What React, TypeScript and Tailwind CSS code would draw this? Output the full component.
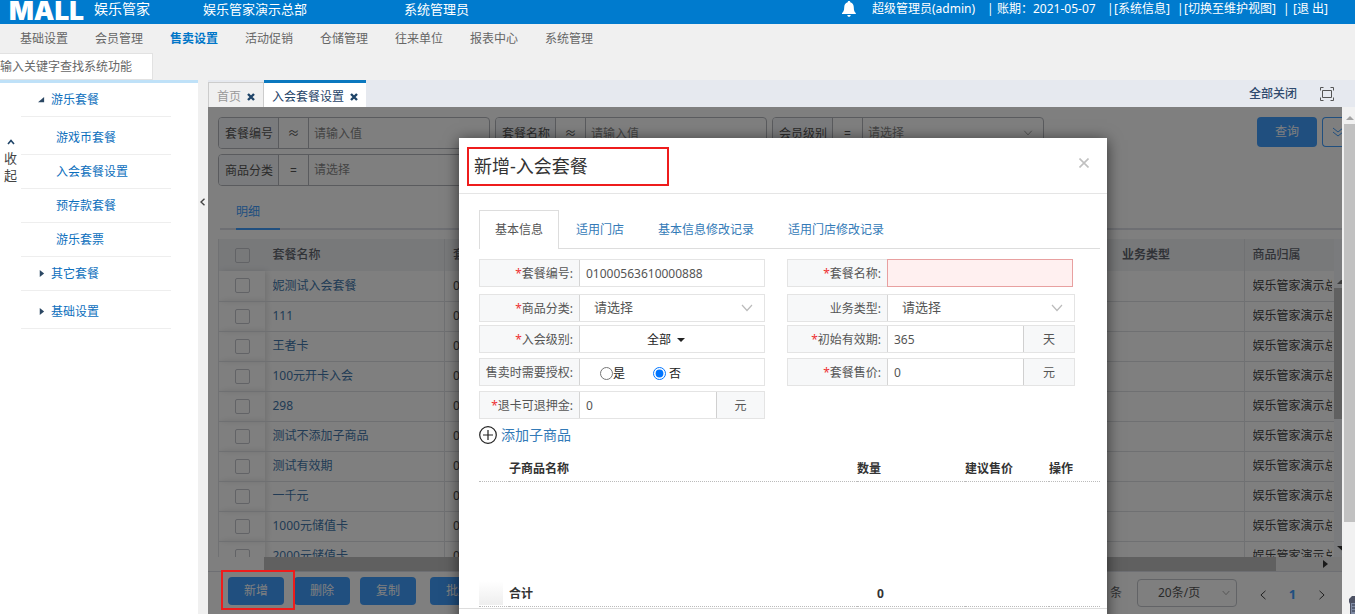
import { useState } from 'react';
import type { ReactNode } from 'react';

const NAV_ITEMS = ['基础设置', '会员管理', '售卖设置', '活动促销', '仓储管理', '往来单位', '报表中心', '系统管理'];
const SUB_MENU = ['游戏币套餐', '入会套餐设置', '预存款套餐', '游乐套票'];
const ROWS = [
  '妮测试入会套餐',
  '111',
  '王者卡',
  '100元开卡入会',
  '298',
  '测试不添加子商品',
  '测试有效期',
  '一千元',
  '1000元储值卡',
  '2000元储值卡',
];
const MODAL_TABS = ['基本信息', '适用门店', '基本信息修改记录', '适用门店修改记录'];

const ChevronDown = ({ className }: { className: string }) => (
  <svg viewBox="0 0 12 8" className={className} fill="none" stroke="currentColor" strokeWidth="1.2">
    <path d="M1 1l5 5.5L11 1" />
  </svg>
);

const Cross = () => (
  <svg viewBox="0 0 8 8" className="h-2 w-2" stroke="#1f4468" strokeWidth="2.4">
    <path d="M1 1l6 6M7 1l-6 6" />
  </svg>
);

const Header = () => (
  <header className="flex h-6 shrink-0 items-center bg-[#007bce] pb-1.5 text-[13px] leading-4 whitespace-nowrap text-white">
    <div className="w-[94px] pt-1 pl-[9px] font-['Inter',sans-serif] text-[26px] leading-4 font-black">MALL</div>
    <div className="w-[109px] text-sm leading-4">娱乐管家</div>
    <div className="w-[201px]">娱乐管家演示总部</div>
    <div className="flex-1">系统管理员</div>
    <svg viewBox="0 0 14 16" className="mr-4 h-4 w-3.5" fill="white">
      <path d="M7 0c.8 0 1.300.5 1.300 1.200C10.800 1.800 11.800 4 11.800 6.500c0 3.200.7 4.500 2 5.500v1H0v-1c1.300-1 2.200-2.300 2.200-5.500 0-2.500 1-4.700 3.500-5.300C5.700.5 6.200 0 7 0zM5.300 14h3.400c0 1-.7 1.800-1.700 1.800S5.300 15 5.300 14z" />
    </svg>
    <div className="flex pr-[27px] text-xs leading-4">
      <span className="w-[115px]">超级管理员(admin)</span>
      <span className="w-[10px]">|</span>
      <span className="w-[110px]">账期：2021-05-07</span>
      <span className="w-[7px]">|</span>
      <a href="#info" className="w-[63px]">[系统信息]</a>
      <span className="w-[7px]">|</span>
      <a href="#switch" className="w-[99px]">[切换至维护视图]</a>
      <span className="w-[10px]">|</span>
      <a href="#logout">[退 出]</a>
    </div>
  </header>
);

const TopNav = () => (
  <div className="shrink-0">
    <nav className="flex h-[29px] gap-[27px] pl-5 text-xs leading-[30px] text-[#666]">
      {NAV_ITEMS.map((item) => (
        <a key={item} href="#nav" className={item === '售卖设置' ? 'font-bold text-[#0076c8]' : ''}>
          {item}
        </a>
      ))}
    </nav>
    <input
      aria-label="查找系统功能"
      placeholder="输入关键字查找系统功能"
      className="block h-[27px] w-[153px] border border-l-0 border-[#e2e2e2] bg-white text-xs placeholder:text-[#666]"
    />
  </div>
);

const MenuTitle = ({ text, open }: { text: string; open?: boolean }) => (
  <a href="#menu" className="flex h-[34px] items-center border-b border-[#eee] pl-[17px]">
    <svg viewBox="0 0 8 8" className="mr-[6px] h-[7px] w-[7px]" fill="#2b4763">
      {open ? <path d="M7 1v6H0z" /> : <path d="M2 0l5 4-5 4z" />}
    </svg>
    {text}
  </a>
);

const Sidebar = () => (
  <aside className="flex w-[198px] shrink-0 border-t-3 border-[#bfe1f8] bg-white text-xs text-[#0d6fbd]">
    <button className="flex w-[21px] flex-col items-center self-start pt-14 text-[13px] leading-[17px] text-[#444]">
      <svg viewBox="0 0 8 6" className="mb-[5px] h-1.5 w-2" fill="none" stroke="#1f4468" strokeWidth="1.6">
        <path d="M1 5l3-3.500L7 5" />
      </svg>
      <span>收</span>
      <span>起</span>
    </button>
    <nav className="w-[150px]">
      <MenuTitle text="游乐套餐" open />
      <div className="pt-1">
        {SUB_MENU.map((item) => (
          <a key={item} href="#sub" className="flex h-[34px] items-center border-b border-[#eee] pl-[35px]">
            {item}
          </a>
        ))}
      </div>
      <MenuTitle text="其它套餐" />
      <div className="pt-1">
        <MenuTitle text="基础设置" />
      </div>
    </nav>
  </aside>
);

const PageTabs = () => (
  <div className="flex h-[27px] shrink-0 items-end bg-[#e6e9ef] text-xs">
    <div className="flex h-[25px] w-14 items-center gap-1.5 border border-b-0 border-[#ccc] bg-[#f0f0f0] pt-1 pl-2 text-[#999]">
      <span>首页</span>
      <button aria-label="关闭首页"><Cross /></button>
    </div>
    <div className="flex h-[27px] w-[102px] items-center gap-1.5 border-t-3 border-[#0a78bf] bg-white pt-1 pl-2 text-[#1f4468]">
      <span>入会套餐设置</span>
      <button aria-label="关闭入会套餐设置"><Cross /></button>
    </div>
    <button className="mr-[23px] ml-auto h-[27px] font-medium text-[#2f4a6d]">全部关闭</button>
    <button aria-label="全屏" className="mr-[21px] h-[27px]">
      <svg viewBox="0 0 14 14" className="h-3.5 w-3.5" fill="none" stroke="#555">
        <path d="M.5 3.500v-3h3M10.500.5h3v3M13.500 10.500v3h-3M3.500 13.500h-3v-3M2.500 3.500h9v7h-9z" />
      </svg>
    </button>
  </div>
);

interface FilterProps {
  id: string;
  label: string;
  op: string;
  select?: boolean;
}

const Filter = ({ id, label, op, select }: FilterProps) => (
  <div className="flex h-8 w-[272px] shrink-0 items-center overflow-hidden rounded border border-[#b4b7bd]">
    <label htmlFor={id} className="h-full w-[60px] border-r border-[#b4b7bd] bg-[#f5f7fa] pl-1.5 leading-8 text-[#555]">
      {label}
    </label>
    <span className="h-full w-[30px] border-r border-[#b4b7bd] text-center leading-8 text-[#555]">{op}</span>
    {select ? (
      <>
        <select id={id} className="h-full min-w-0 flex-1 appearance-none pl-[5px] text-[#888]">
          <option>请选择</option>
        </select>
        <ChevronDown className="mr-2.5 h-1.5 w-2.5 text-[#999]" />
      </>
    ) : (
      <input id={id} placeholder="请输入值" className="h-full min-w-0 flex-1 pl-[5px] placeholder:text-[#888]" />
    )}
  </div>
);

const Check = ({ label }: { label: string }) => (
  <input
    type="checkbox"
    aria-label={label}
    className="ml-4 block h-[15px] w-[15px] appearance-none rounded-xs border border-[#c4c7cd]"
  />
);

const PackageTable = () => (
  <div className="ml-2.5 flex min-h-0 flex-1 flex-col">
    <div className="flex min-h-0 flex-1 overflow-hidden bg-[#f5f7fa]">
      <div className="min-w-0 flex-1 overflow-hidden bg-white">
        <table className="w-full table-fixed border-collapse text-left whitespace-nowrap">
          <thead>
            <tr className="h-8 bg-[#f0f2f5] text-[#62666f]">
              <th className="w-[46px] border-l border-[#e0e2e6]"><Check label="全选" /></th>
              <th className="w-[180px] pl-2 font-medium">套餐名称</th>
              <th className="border-l border-[#e0e2e6] pl-2 font-medium">套餐编号</th>
              <th className="w-[130px] pl-2 font-bold">业务类型</th>
              <th className="w-[90px] border-l border-[#e0e2e6] pl-2 font-medium">商品归属</th>
            </tr>
          </thead>
          <tbody>
            {ROWS.map((name) => (
              <tr key={name} className="h-[30px] border-b border-[#dfe1e5] text-[#444]">
                <td className="border-l border-[#e0e2e6] shadow-[2px_0_6px_rgba(0,0,0,0.12)]"><Check label={name} /></td>
                <td className="pl-2"><a href="#row" className="text-[#4277ab]">{name}</a></td>
                <td className="border-l border-[#e0e2e6] pl-2">0100056361</td>
                <td />
                <td className="border-l border-[#e0e2e6] pl-2">
                  <div className="mr-0.5 overflow-hidden">娱乐管家演示总部</div>
                </td>
              </tr>
            ))}
          </tbody>
        </table>
      </div>
      <div className="flex w-2 flex-col items-end pt-10">
        <svg viewBox="0 0 5 5" className="mb-1 h-[5px] w-[5px]" fill="#777"><path d="M0 5l4-4 1 0v4z" /></svg>
        <div className="h-[131px] w-2 bg-[#c1c1c1]" />
        <svg viewBox="0 0 5 5" className="mt-auto mb-1.5 h-[5px] w-[5px]" fill="#333"><path d="M0 0h5v4.500z" /></svg>
      </div>
    </div>
    <div className="ml-[46px] flex h-3.5 items-center bg-[#f1f1f1]">
      <div className="h-full flex-1 bg-[#c1c1c1]" />
      <svg viewBox="0 0 5 8" className="mr-[14px] ml-[47px] h-2 w-[5px]" fill="#333"><path d="M0 0l5 4-5 4z" /></svg>
    </div>
  </div>
);

const ActionBar = () => (
  <div className="flex h-[43px] shrink-0 items-start border-t border-[#dcdfe6] pt-[5px] pl-5">
    <button className="h-7 w-14 rounded bg-[#409eff] text-white">新增</button>
    <button className="ml-2.5 h-7 w-14 rounded bg-[#409eff] text-white">删除</button>
    <button className="ml-2.5 h-7 w-14 rounded bg-[#409eff] text-white">复制</button>
    <button className="ml-3.5 h-7 w-20 rounded bg-[#409eff] text-white">批量修改</button>
    <span className="ml-auto leading-8 text-[#606266]">共 10 条</span>
    <div className="mt-0.5 ml-[15px] flex h-7 w-[100px] items-center rounded border border-[#c4c7cd]">
      <select aria-label="每页条数" className="h-full min-w-0 flex-1 appearance-none pl-5 text-[#555]">
        <option>20条/页</option>
      </select>
      <ChevronDown className="mr-1.5 h-1.5 w-2 text-[#999]" />
    </div>
    <div className="flex h-9 w-[105px] items-center justify-between pr-[15px] pl-[21px]">
      <button aria-label="上一页">
        <ChevronDown className="h-2 w-2.5 rotate-90 text-[#444]" />
      </button>
      <button className="text-[13px] font-bold text-[#409eff]">1</button>
      <button aria-label="下一页">
        <ChevronDown className="h-2 w-2.5 -rotate-90 text-[#444]" />
      </button>
    </div>
  </div>
);

interface FieldProps {
  id?: string;
  label: string;
  required?: boolean;
  children: ReactNode;
}

const Field = ({ id, label, required, children }: FieldProps) => (
  <div className="flex h-7 border border-[#e4e4e4] text-[#555]">
    <label htmlFor={id} className="w-[99px] shrink-0 bg-[#f7f8f9] pr-1.5 text-right leading-7">
      {required && <span className="text-[#e33]">*</span>}
      {label}:
    </label>
    <div className="flex min-w-0 flex-1 items-center border-l border-[#d5d5d5]">{children}</div>
  </div>
);

const TextInput = ({ id, value }: { id: string; value: string }) => (
  <input id={id} defaultValue={value} className="h-full min-w-0 flex-1 pl-1.5 text-[#555]" />
);

const Unit = ({ children, wide }: { children: ReactNode; wide?: boolean }) => (
  <span
    className={`h-full border-l border-[#d0d0d0] bg-[#f7f8f9] text-center leading-7 ${wide ? 'w-[51px]' : 'w-12'}`}
  >
    {children}
  </span>
);

const SelectInput = ({ id }: { id: string }) => (
  <>
    <select id={id} className="h-full min-w-0 flex-1 appearance-none pl-3.5 text-[13px] text-[#555]">
      <option>请选择</option>
    </select>
    <ChevronDown className="mr-[11px] h-2 w-3 text-[#bbb]" />
  </>
);

const PackageForm = () => {
  const [needAuth, setNeedAuth] = useState('no');

  return (
    <div className="grid grid-cols-[286px_288px] gap-x-[22px] pt-2.5">
      <div className="mb-[7px]">
        <Field id="code" label="套餐编号" required><TextInput id="code" value="01000563610000888" /></Field>
      </div>
      <div className="mb-[7px] pr-0.5">
        <Field id="name" label="套餐名称" required>
          <input id="name" className="h-full min-w-0 flex-1 bg-[#fff0f0] outline outline-[#e8a0a0]" />
        </Field>
      </div>
      <div className="mb-[3px]">
        <Field id="category" label="商品分类" required><SelectInput id="category" /></Field>
      </div>
      <div className="mb-[3px]">
        <Field id="biz" label="业务类型"><SelectInput id="biz" /></Field>
      </div>
      <div className="mb-[5px]">
        <Field id="level" label="入会级别" required>
          <button id="level" className="flex h-full flex-1 items-center justify-center gap-1.5 pt-0.5 pr-3 text-[#222]">
            全部
            <svg viewBox="0 0 8 4" className="h-1 w-2" fill="#222"><path d="M0 0h8L4 4z" /></svg>
          </button>
        </Field>
      </div>
      <div className="mb-[5px]">
        <Field id="days" label="初始有效期" required><TextInput id="days" value="365" /><Unit wide>天</Unit></Field>
      </div>
      <div className="mb-[5px]">
        <Field label="售卖时需要授权">
          <label className="ml-5 flex h-full items-center text-[#222]">
            <input type="radio" name="auth" className="mt-0.5" checked={needAuth === 'yes'} onChange={() => setNeedAuth('yes')} />
            <span className="pt-1">是</span>
          </label>
          <label className="ml-7 flex h-full items-center gap-[3px] text-[#222]">
            <input type="radio" name="auth" className="mt-0.5" checked={needAuth === 'no'} onChange={() => setNeedAuth('no')} />
            <span className="pt-1">否</span>
          </label>
        </Field>
      </div>
      <div className="mb-[5px]">
        <Field id="price" label="套餐售价" required><TextInput id="price" value="0" /><Unit wide>元</Unit></Field>
      </div>
      <Field id="deposit" label="退卡可退押金" required><TextInput id="deposit" value="0" /><Unit>元</Unit></Field>
    </div>
  );
};

const PackageModal = () => (
  <div role="dialog" aria-label="新增-入会套餐" className="mt-[31px] w-[648px] bg-white shadow-[0_2px_14px_rgba(0,0,0,0.6)]">
    <div className="flex h-14 items-center justify-between border-b border-[#e5e5e5] pr-[18px] pb-0.5 pl-2">
      <h4 className="mt-1 h-[39px] w-[202px] border-2 border-[#ee1c1c] pl-[5px] text-lg leading-[34px] text-[#333]">新增-入会套餐</h4>
      <button aria-label="关闭" className="pb-1">
        <svg viewBox="0 0 10 10" className="h-2.5 w-2.5" stroke="#c0c0c0" strokeWidth="1.6">
          <path d="M.5.5l9 9M9.500.5l-9 9" />
        </svg>
      </button>
    </div>
    <div className="pt-4 pr-[7px] pl-5">
      <div className="flex h-[39px] text-[#337ab7]">
        {MODAL_TABS.map((tab, i) => (
          <button
            key={tab}
            className={
              i === 0
                ? 'border border-b-0 border-[#ddd] px-[15px] text-[#555]'
                : 'border-b border-[#ddd] pt-0.5 pr-4 pl-[18px] nth-2:pl-[17px]'
            }
          >
            {tab}
          </button>
        ))}
        <div className="flex-1 border-b border-[#ddd]" />
      </div>
      <PackageForm />
      <button className="mt-[6px] flex h-5 items-center gap-1 text-sm leading-5 text-[#337ab7]">
        <svg viewBox="0 0 18 18" className="h-[18px] w-[18px]" fill="none" stroke="#222" strokeWidth="1.2">
          <path d="M9 4v10M4 9h10" />
          <circle cx="9" cy="9" r="8.300" />
        </svg>
        添加子商品
      </button>
      <table className="mt-3 w-full table-fixed text-left text-[#333]">
        <thead>
          <tr className="h-6 border-b border-dotted border-[#bbb]">
            <th className="w-[30px]" />
            <th>子商品名称</th>
            <th className="w-[108px]">数量</th>
            <th className="w-[84px]">建议售价</th>
            <th className="w-[51px]">操作</th>
          </tr>
        </thead>
        <tbody>
          <tr className="h-[99px]"><td colSpan={5} /></tr>
        </tbody>
        <tfoot>
          <tr className="h-[26px] border-b border-dotted border-[#bbb] font-bold">
            <td><div className="h-6 w-6 bg-linear-to-b from-white to-[#eee]" /></td>
            <td className="pt-0.5">合计</td>
            <td className="pt-0.5 pl-5">0</td>
            <td colSpan={2} />
          </tr>
        </tfoot>
      </table>
    </div>
    <div className="mt-px h-14 border-t border-[#ddd]" />
  </div>
);

const PageScrollbar = () => (
  <div className="relative flex w-[13px] shrink-0 flex-col bg-[#f1f1f1]">
    <svg viewBox="0 0 8 5" className="mt-2 mb-1 ml-1 h-[5px] w-2" fill="#a3a3a3"><path d="M0 5l4-4 4 4z" /></svg>
    <div className="ml-0.5 h-[398px] bg-[#c1c1c1]" />
    <svg viewBox="0 0 6 18" className="absolute right-0 bottom-0 h-[18px] w-1.5">
      <path d="M6 0H3L0 3v3l1 2v10h5z" fill="#4c5163" />
      <path d="M2 7h4v11H2z" fill="#7e8aa3" />
      <path d="M3 9h3M3 12h3M3 15h3" stroke="#2d3244" />
    </svg>
  </div>
);

const App = () => (
  <div className="flex h-screen flex-col overflow-hidden bg-[#f0f0f0] font-['Noto_Sans','Noto_Sans_CJK_SC',sans-serif] text-xs">
    <Header />
    <TopNav />
    <div className="flex min-h-0 flex-1">
      <Sidebar />
      <button aria-label="收起菜单" className="flex w-2.5 shrink-0 items-center justify-center pr-0.5 pb-[290px]">
        <svg viewBox="0 0 5 8" className="h-2 w-[5px]" fill="none" stroke="#444" strokeWidth="1.4">
          <path d="M4.500.8L1 4l3.500 3.200" />
        </svg>
      </button>
      <main className="flex min-w-0 flex-1 flex-col">
        <PageTabs />
        <div className="flex min-h-0 flex-1">
          <section className="relative flex min-w-0 flex-1 flex-col overflow-hidden bg-white">
            <div className="flex shrink-0 justify-between pt-2.5 pl-2.5">
              <div className="flex flex-col gap-[5px]">
                <div className="flex gap-[5px]">
                  <Filter id="f-code" label="套餐编号" op="≈" />
                  <Filter id="f-name" label="套餐名称" op="≈" />
                  <Filter id="f-level" label="会员级别" op="=" select />
                </div>
                <Filter id="f-category" label="商品分类" op="=" select />
              </div>
              <div className="flex gap-[5px]">
                <button className="h-[30px] w-[60px] rounded bg-[#409eff] text-white">查询</button>
                <button aria-label="展开" className="flex h-[30px] w-5 items-center rounded-l border border-r-0 border-[#409eff] pl-2.5">
                  <svg viewBox="0 0 10 10" className="h-2.5 w-2.5 shrink-0" fill="none" stroke="#409eff">
                    <path d="M0 1l5 4 5-4M0 5l5 4 5-4" />
                  </svg>
                </button>
              </div>
            </div>
            <div className="my-2 mb-[9px] ml-3 flex h-9 shrink-0 border-b-2 border-[#dcdfe6] pl-4">
              <button className="h-9 w-11 border-b-2 border-[#409eff] pt-0.5 text-left text-[#409eff]">明细</button>
            </div>
            <PackageTable />
            <ActionBar />
            <div className="absolute inset-0 flex items-start justify-center bg-black/50 pl-4">
              <PackageModal />
            </div>
            {/* highlight frame around the add button, sits above the mask */}
            <div className="pointer-events-none absolute bottom-1 left-[13px] h-10 w-[74px] border-2 border-[#ee1c1c]" />
          </section>
          <PageScrollbar />
        </div>
      </main>
    </div>
  </div>
);

export default App;
